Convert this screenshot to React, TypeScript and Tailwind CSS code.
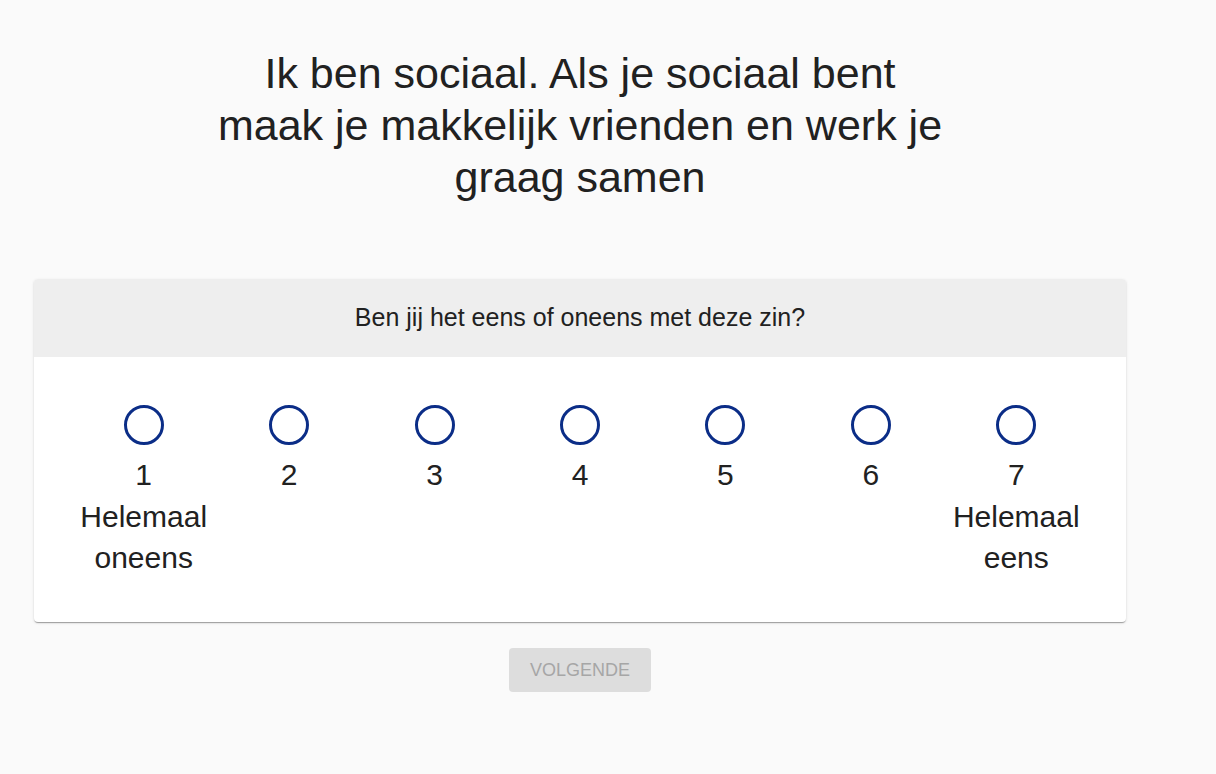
import React, { useState } from "react";

const options = [
  { value: 1, label: "Helemaal oneens" },
  { value: 2, label: "" },
  { value: 3, label: "" },
  { value: 4, label: "" },
  { value: 5, label: "" },
  { value: 6, label: "" },
  { value: 7, label: "Helemaal eens" },
];

const App = () => {
  const [selected, setSelected] = useState<number | null>(null);

  return (
    <div className="min-h-screen w-full bg-[#fafafa] text-[#212121] font-['Liberation_Sans',Arial,sans-serif]">
      <div className="ml-[34px] w-[1092px] pt-[47px]">
        {/* Statement */}
        <h1 className="mx-auto max-w-[740px] text-center text-[43px] leading-[52px] font-normal">
          Ik ben sociaal. Als je sociaal bent maak je makkelijk vrienden en werk je graag samen
        </h1>

        {/* Question card */}
        <div className="mt-[76px] overflow-hidden rounded-[4px] bg-white shadow-[0_2px_1px_-1px_rgba(0,0,0,0.2),0_1px_1px_0_rgba(0,0,0,0.14),0_1px_3px_0_rgba(0,0,0,0.12)]">
          <div className="flex h-[78px] items-center justify-center bg-[#eeeeee] text-[25px]">
            Ben jij het eens of oneens met deze zin?
          </div>
          <div className="grid grid-cols-7 px-[37px] pt-[48px] pb-[44px]">
            {options.map(({ value, label }) => (
              <label
                key={value}
                className="flex cursor-pointer flex-col items-center text-center"
                onClick={() => setSelected(value)}
              >
                <span className="flex h-10 w-10 items-center justify-center rounded-full border-[3px] border-[#0b2d87]">
                  {selected === value && (
                    <span className="h-5 w-5 rounded-full bg-[#0b2d87]" />
                  )}
                </span>
                <span className="mt-[9px] text-[30px] leading-[42px]">{value}</span>
                {label && (
                  <span className="text-[30px] leading-[41px]">{label}</span>
                )}
              </label>
            ))}
          </div>
        </div>

        <div className="mt-[26px] flex justify-center">
          <button
            disabled={selected === null}
            className="h-[44px] w-[142px] rounded-[4px] bg-[#dddddd] text-[18px] uppercase text-[#a6a6a6]"
          >
            Volgende
          </button>
        </div>
      </div>
    </div>
  );
};

export default App;
